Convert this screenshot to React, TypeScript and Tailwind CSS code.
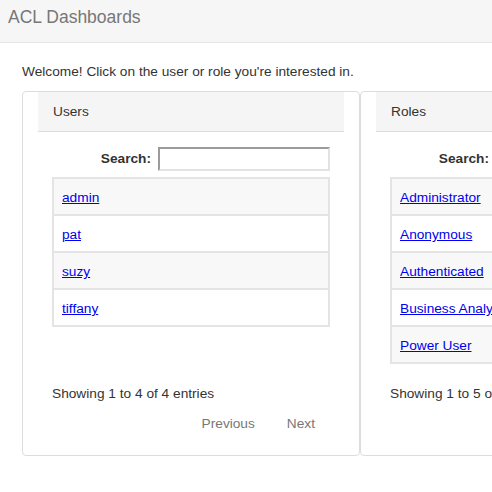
import React from "react";

const font = { fontFamily: '"Liberation Sans", Arial, sans-serif' };

function Panel({ title, items, total }: { title: string; items: string[]; total: number }) {
  return (
    <div className="w-[338px] shrink-0 border border-[#dddddd] rounded-[4px] px-[15px] pb-[22px] flex flex-col bg-white">
      <div className="bg-[#f5f5f5] border-b border-[#dddddd] px-[15px] py-[10px] leading-[19px] text-[13.7px] text-[#333]">
        {title}
      </div>
      <div className="px-[14px]">
        <div className="flex justify-end items-center gap-[7px] mt-[15px]">
          <span className="font-bold text-[13.7px] text-[#333]">Search:</span>
          <input
            className="w-[172px] h-[24px] border-2 border-t-[#9b9b9b] border-l-[#9b9b9b] border-r-[#e2e2e2] border-b-[#e2e2e2] bg-white outline-none"
            type="text"
          />
        </div>
        <div className="mt-[6px] h-[187px]">
          <div className="border-2 border-[#e4e4e4]">
            {items.map((it, i) => (
              <div
                key={it}
                className={
                  "flex items-center px-[8px] pt-[4px] text-[13.7px] " +
                  (i > 0 ? "h-[37px] border-t-2 border-[#e4e4e4] " : "h-[35px] ") +
                  (i % 2 === 0 ? "bg-[#f8f8f8]" : "bg-white")
                }
              >
                <a href="#" className="text-[#0000ee] underline whitespace-nowrap">
                  {it}
                </a>
              </div>
            ))}
          </div>
        </div>
        <div className="mt-[21px] leading-[18px] text-[13.7px] text-[#333] whitespace-nowrap">
          Showing 1 to {total} of {total} entries
        </div>
        <div className="mt-[12px] flex justify-end leading-[18px] text-[13.7px] text-[#777]">
          <span className="px-[16px]">Previous</span>
          <span className="pl-[16px] pr-[15px]">Next</span>
        </div>
      </div>
    </div>
  );
}

export default function App() {
  return (
    <div style={font} className="w-[492px] h-[492px] overflow-hidden bg-white">
      <div className="h-[43px] bg-[#f6f6f6] border-b border-[#e5e5e5] px-[8px] pt-[6px]">
        <span className="text-[17.5px] leading-[22px] text-[#777]">ACL Dashboards</span>
      </div>
      <div className="pl-[22px]">
        <p className="mt-[20px] leading-[18px] text-[13.7px] text-[#333] whitespace-nowrap">
          Welcome! Click on the user or role you're interested in.
        </p>
        <div className="mt-[10px] flex">
          <Panel title="Users" items={["admin", "pat", "suzy", "tiffany"]} total={4} />
          <Panel
            title="Roles"
            items={["Administrator", "Anonymous", "Authenticated", "Business Analyst", "Power User"]}
            total={5}
          />
        </div>
      </div>
    </div>
  );
}
